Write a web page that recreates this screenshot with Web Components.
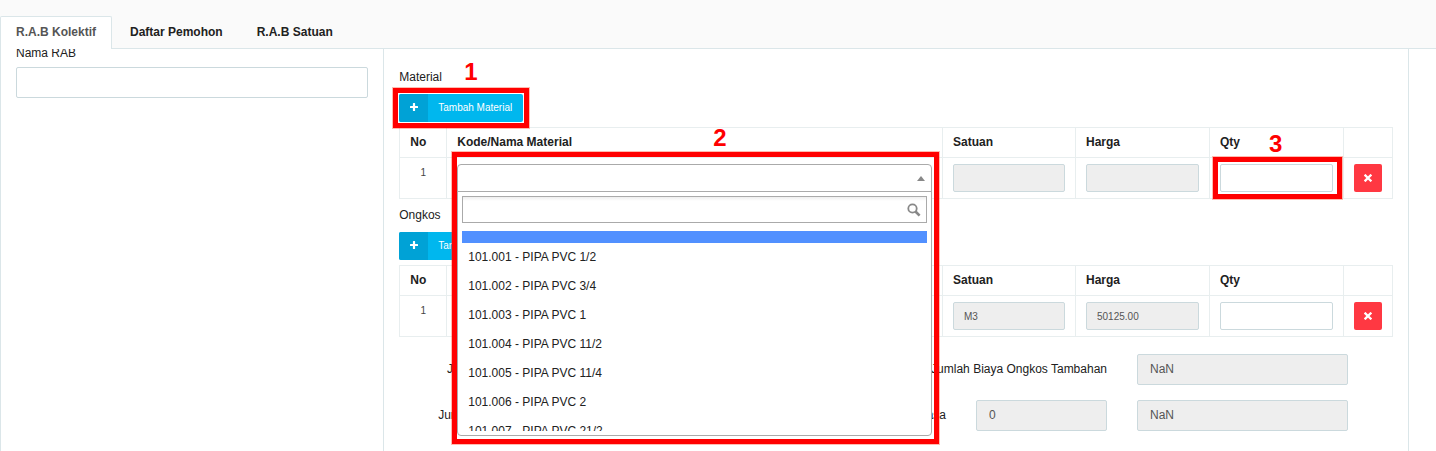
<!DOCTYPE html>
<html lang="id">
<head>
<meta charset="utf-8">
<title>R.A.B Kolektif</title>
<style>
  html, body { margin: 0; height: 100%; }
  body { font: 12px/16px "Liberation Sans", Arial, sans-serif; color: #212121; background: #fff; overflow: hidden; }
</style>
</head>
<body>
<rab-page></rab-page>
<script>
const define = (name, html, setup) => {
  const template = document.createElement('template');
  template.innerHTML = html;
  customElements.define(name, class extends HTMLElement {
    connectedCallback() {
      if (this.shadowRoot) return;
      const root = this.attachShadow({ mode: 'open' });
      root.append(template.content.cloneNode(true));
      if (setup) setup(root, this);
    }
  });
};

/* One tab of the top bar */
define('rab-tab', `
  <style>
    :host { display: block; }
    button { display: block; height: 33px; padding: 0 15px 2px; border: 1px solid transparent; border-bottom: 0;
      border-radius: 2px 2px 0 0; background: none; font: bold 12px/16px "Liberation Sans", Arial, sans-serif; color: #212121; }
    :host([active]) button { background: #fff; border-color: #dbe6e9; color: #555; }
  </style>
  <button type="button" role="tab"><slot></slot></button>`);

/* Labelled text field: regular or compact (table cells), grey when read-only */
define('rab-field', `
  <style>
    :host { display: block; }
    label { display: block; margin-bottom: 6px; }
    label[hidden] { display: none; }
    input { display: block; box-sizing: border-box; width: 100%; height: 31px; padding: 0 12px 2px; margin: 0;
      border: 1px solid #cbd9dd; border-radius: 2px; background: #fff; outline: 0;
      font: 12px/16px "Liberation Sans", Arial, sans-serif; color: #555; }
    input:read-only { background: #eee; }
    :host([compact]) input { height: 28px; padding: 0 10px; font-size: 10px; }
  </style>
  <label for="field"></label>
  <input id="field" type="text">`, (root, host) => {
  const input = root.querySelector('input');
  const label = root.querySelector('label');
  input.value = host.getAttribute('value') || '';
  input.readOnly = host.hasAttribute('readonly');
  if (host.hasAttribute('caption')) {
    label.textContent = host.getAttribute('caption');
  } else {
    label.hidden = true;
    input.setAttribute('aria-label', host.getAttribute('label') || '');
  }
});

define('add-button', `
  <style>
    :host { display: block; width: max-content; }
    button { display: flex; height: 28px; padding: 0; border: 0; border-radius: 2px; overflow: hidden; align-items: stretch;
      background: #00b7ee; color: #fff; font: 10px/16px "Liberation Sans", Arial, sans-serif; }
    .icon { display: grid; place-items: center; width: 29px; background: #00a2d6; }
    .icon svg { margin-bottom: 2px; }
    .text { display: grid; place-items: center; padding: 0 11px 0 10px; }
  </style>
  <button type="button">
    <span class="icon"><svg width="8" height="8" viewBox="0 0 8 8"><path d="M3.4 0h1.2q.5 0 .5.5v2.4h2.4q.5 0 .5.5v1.2q0 .5-.5.5H5.1v2.4q0 .5-.5.5H3.4q-.5 0-.5-.5V5.1H.5q-.5 0-.5-.5V3.400q0-.5.5-.5h2.4V.5q0-.5.5-.5z" fill="#fff"/></svg></span>
    <span class="text"><slot></slot></span>
  </button>`);

define('delete-button', `
  <style>
    :host { display: block; }
    button { display: grid; place-items: center; width: 28px; height: 28px; padding: 0; border: 0; border-radius: 2px; background: #ff3842; }
  </style>
  <button type="button" aria-label="Hapus">
    <svg width="8" height="8" viewBox="0 0 8 8"><path d="M1.500 1.500l5 5M6.500 1.500l-5 5" stroke="#fff" stroke-width="2.300" stroke-linecap="square"/></svg>
  </button>`);

/* Numbered red frame drawn over the slotted content */
define('step-mark', `
  <style>
    :host { display: block; position: relative; }
    .frame { position: absolute; inset: var(--inset, -6px); border: 5px solid #f00; z-index: 5; pointer-events: none; outline: 1px solid rgba(255, 60, 30, .35); }
    .number { position: absolute; z-index: 6; left: var(--number-left, 50%); bottom: calc(100% + var(--number-gap, 8px));
      font: bold 24px/28px "Liberation Sans", Arial, sans-serif; color: #f00; }
  </style>
  <slot></slot><span class="frame"></span><span class="number"></span>`, (root, host) => {
  root.querySelector('.number').textContent = host.getAttribute('step');
});

/* Searchable select, shown open over what follows it */
define('material-select', `
  <style>
    :host { display: block; position: relative; z-index: 3; height: 28px; }
    .box { position: absolute; inset: 0 0 auto; box-sizing: border-box; border: 1px solid #aaa; border-radius: 4px; background: #fff; }
    .current { display: flex; align-items: center; justify-content: flex-end; width: 100%; height: 27px; padding: 0 6px;
      border: 0; border-bottom: 1px solid #aaa; background: none; }
    .search { display: flex; align-items: center; margin: 4px; height: 25px; padding-right: 5px; border: 1px solid #aaa;
      background: linear-gradient(#eee, #fff 4px); }
    .search input { flex: 1; min-width: 0; border: 0; outline: 0; background: none; }
    ul { list-style: none; margin: 8px 4px 4px; padding: 0; height: 200px; overflow: hidden; }
    li { height: 15px; padding: 7px 6px; line-height: 15px; }
    li.highlight { height: 12px; padding: 0; background: #5190ff; }
  </style>
  <div class="box">
    <button class="current" type="button" aria-label="Kode/Nama Material" aria-expanded="true">
      <svg width="8" height="5" viewBox="0 0 8 5"><path d="M0 5L4 0l4 5z" fill="#888"/></svg>
    </button>
    <div class="search">
      <input type="text" aria-label="Cari material">
      <svg width="14" height="14" viewBox="0 0 14 14" fill="none" stroke="#888"><circle cx="5.500" cy="5.500" r="4.200" stroke-width="1.800"/><path d="M8.500 8.500L12.600 12.600" stroke-width="2.600"/></svg>
    </div>
    <ul role="listbox">
      <li class="highlight" role="option" aria-selected="true"></li>
      <li role="option">101.001 - PIPA PVC 1/2</li>
      <li role="option">101.002 - PIPA PVC 3/4</li>
      <li role="option">101.003 - PIPA PVC 1</li>
      <li role="option">101.004 - PIPA PVC 11/2</li>
      <li role="option">101.005 - PIPA PVC 11/4</li>
      <li role="option">101.006 - PIPA PVC 2</li>
      <li role="option">101.007 - PIPA PVC 21/2</li>
    </ul>
  </div>`);

const tableStyle = `
  <style>
    :host { display: block; padding-top: 8px; }
    h2 { margin: 0 0 9px; font: inherit; }
    table { width: 100%; margin-top: 5px; border-collapse: collapse; table-layout: fixed; }
    th, td { box-sizing: border-box; border: 1px solid #e8eeef; padding: 6px 10px; text-align: left; vertical-align: top; }
    th { height: 30px; line-height: 17px; }
    td { height: 41px; }
    .no { width: 47px; } .mid { width: 133px; } .qty { width: 134px; } .act { width: 49px; }
    td:first-child { text-align: center; font-size: 10px; line-height: 18px; color: #444; }
    .add { width: max-content; --number-left: 65px; --number-gap: 8px; }
    .pick { --inset: -12px -7px -252px -5px; --number-left: 256px; --number-gap: 12px; }
    .amount { --inset: -7px -9px -7px -7px; --number-left: 49px; --number-gap: 6px; }
  </style>`;
const head = name => `
  <colgroup><col class="no"><col><col class="mid"><col class="qty"><col class="qty"><col class="act"></colgroup>
  <thead><tr><th>No</th><th>${name}</th><th>Satuan</th><th>Harga</th><th>Qty</th><th></th></tr></thead>`;

define('material-section', `${tableStyle}
  <h2>Material</h2>
  <step-mark step="1" class="add"><add-button>Tambah Material</add-button></step-mark>
  <table>${head('Kode/Nama Material')}
    <tbody><tr>
      <td>1</td>
      <td><step-mark step="2" class="pick"><material-select></material-select></step-mark></td>
      <td><rab-field compact readonly label="Satuan"></rab-field></td>
      <td><rab-field compact readonly label="Harga"></rab-field></td>
      <td><step-mark step="3" class="amount"><rab-field compact label="Qty"></rab-field></step-mark></td>
      <td><delete-button></delete-button></td>
    </tr></tbody>
  </table>`);

define('ongkos-section', `${tableStyle}
  <h2>Ongkos</h2>
  <add-button>Tambah Ongkos</add-button>
  <table>${head('')}
    <tbody><tr>
      <td>1</td>
      <td></td>
      <td><rab-field compact readonly label="Satuan" value="M3"></rab-field></td>
      <td><rab-field compact readonly label="Harga" value="50125.00"></rab-field></td>
      <td><rab-field compact label="Qty"></rab-field></td>
      <td><delete-button></delete-button></td>
    </tr></tbody>
  </table>`);

define('cost-summary', `
  <style>
    :host { display: grid; gap: 15px; padding: 17px 45px 0 0; }
    .row { display: grid; grid-template-columns: 225px 1fr 131px 211px; column-gap: 30px; align-items: center; }
    .row > span { padding-bottom: 2px; text-align: right; white-space: nowrap; }
    .wide { grid-column: 2 / 4; }
  </style>
  <div class="row">
    <span>Jumlah Biaya Material Tambahan</span>
    <span class="wide">Jumlah Biaya Ongkos Tambahan</span>
    <rab-field readonly value="NaN" label="Jumlah Biaya Ongkos Tambahan"></rab-field>
  </div>
  <div class="row">
    <span>Jumlah Biaya Material dan Ongkos</span>
    <span>Jasa</span>
    <rab-field readonly value="0" label="Persen Jasa"></rab-field>
    <rab-field readonly value="NaN" label="Jasa"></rab-field>
  </div>`);

define('rab-page', `
  <style>
    :host { display: flex; flex-direction: column; height: 100%; }
    nav { display: flex; gap: 2px; box-sizing: border-box; padding-top: 16px; height: 49px; flex: none;
      background: linear-gradient(#dbe6e9, #dbe6e9) bottom / 100% 1px no-repeat #fafafa; }
    main { flex: 1; min-height: 0; overflow: hidden; display: grid; grid-template-columns: 3fr 8fr; margin-right: 27px; }
    aside { border: solid #dbe6e9; border-width: 0 1px; padding: 0 15px; }
    aside rab-field { margin-top: -4px; }
    article { min-width: 0; border-right: 1px solid #dbe6e9; padding: 12px 15px 0; }
  </style>
  <nav role="tablist">
    <rab-tab active>R.A.B Kolektif</rab-tab>
    <rab-tab>Daftar Pemohon</rab-tab>
    <rab-tab>R.A.B Satuan</rab-tab>
  </nav>
  <main>
    <aside>
      <rab-field caption="Nama RAB"></rab-field>
    </aside>
    <article>
      <material-section></material-section>
      <ongkos-section></ongkos-section>
      <cost-summary></cost-summary>
    </article>
  </main>`);
</script>
</body>
</html>
